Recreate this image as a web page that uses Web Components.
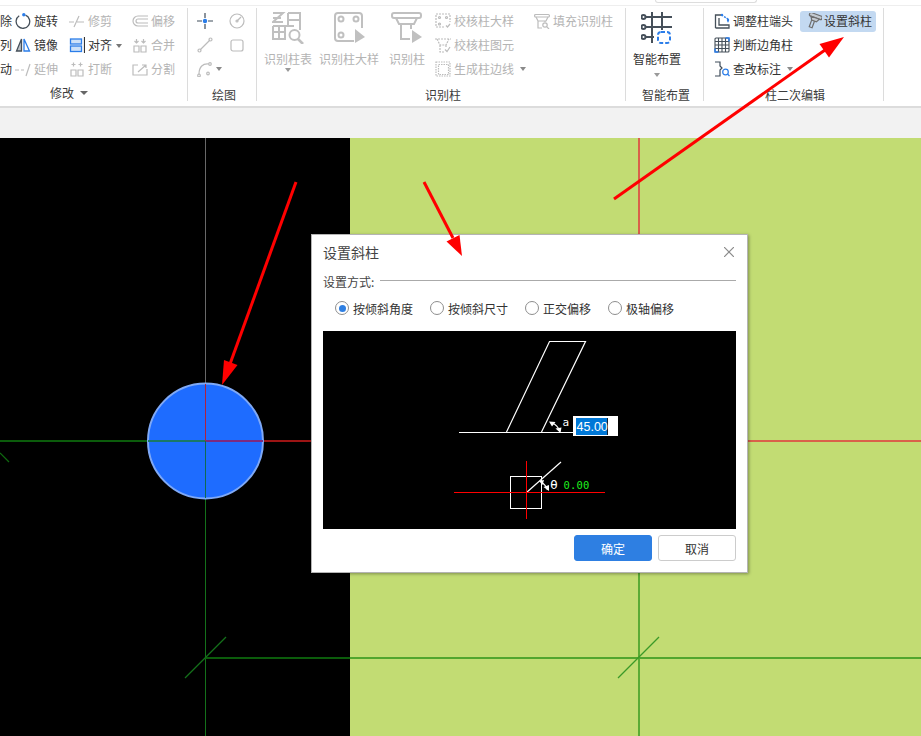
<!DOCTYPE html>
<html lang="zh-CN">
<head>
<meta charset="utf-8">
<title>设置斜柱</title>
<style>
html,body{margin:0;padding:0;background:#fff;overflow:hidden}
body{font-family:"Noto Sans CJK SC","Liberation Sans",sans-serif;font-size:12px;color:#333}
svg{display:block}
svg.d{fill:none;stroke:#bcbcbc;stroke-width:1.2}
svg.k{fill:none;stroke:#46505a;stroke-width:1.3}
</style>
</head>
<body>
<template id="t-shell">
<style>
:host{display:flex;flex-direction:column;position:relative;width:921px;height:736px;overflow:hidden}
.top{height:5px;border-bottom:1px solid #eee;flex:none;box-sizing:content-box}
.top i{display:block;margin-left:655px;width:100px;height:2px;border:1px solid #ddd;border-top:0;border-radius:0 0 3px 3px}
.rib{display:flex;height:100px;flex:none;border-bottom:2px solid #dcdcdc;background:#fff}
.strip{height:30px;flex:none;background:#f2f2f2}
</style>
<div class="top"><i></i></div>
<div class="rib"><slot name="ribbon"></slot></div>
<div class="strip"></div>
<slot></slot>
<slot name="over"></slot>
</template>

<template id="t-group">
<style>
:host{display:block;flex:none;height:100px;padding-top:2px;box-sizing:border-box}
.box{height:93px;border-right:1px solid #dcdcdc;box-sizing:border-box;display:flex;flex-direction:column;padding-top:1px}
.c{display:grid;grid-template-columns:var(--cols,auto);grid-auto-rows:24px;padding-left:var(--pl,0)}
.l{margin-top:auto;margin-bottom:var(--lb-mb,0);padding-left:var(--lb-pl,0);line-height:12px;color:#3c3c3c;display:flex;align-items:center;gap:6px;white-space:nowrap}
.l b{display:var(--lb-arrow,none);width:0;height:0;border:4px solid transparent;border-top:4px solid #666;border-bottom:0}
</style>
<div class="box"><div class="c"><slot></slot></div><div class="l"><span id="lb"></span><b></b></div></div>
</template>

<template id="t-item">
<style>
:host{display:flex;align-items:center;white-space:nowrap;color:#333;font-size:12px;gap:var(--gap,3px);min-width:0}
:host([disabled]){color:#b4b4b4}
:host([active]){background:#c3d9f1;border-radius:3px;height:21px;align-self:center;padding-left:6px;width:76px;box-sizing:border-box;--gap:2px}
:host([clip]){justify-self:start}
.i{width:16px;height:16px;flex:none}
:host([clip]) .i{display:none}
.t{padding-bottom:2px}
.a{display:none;width:0;height:0;border:3px solid transparent;border-top:4px solid #8a8a8a;border-bottom:0;margin-left:3px}
:host([drop]) .a{display:block}
</style>
<span class="i"><slot name="icon"></slot></span><span class="t"><slot></slot></span><span class="a"></span>
</template>

<template id="t-big">
<style>
:host{display:flex;flex-direction:column;align-items:center;grid-row:span 3;padding-top:3px;box-sizing:border-box;white-space:nowrap;color:#333;font-size:12px}
:host([disabled]){color:#b4b4b4}
.i{width:32px;height:32px;flex:none}
.t{margin-top:7px;line-height:16px}
.a{display:none;width:0;height:0;border:3px solid transparent;border-top:4px solid #9a9a9a;border-bottom:0;margin-top:var(--amt,1px)}
:host([drop]) .a{display:block}
</style>
<span class="i"><slot name="icon"></slot></span><span class="t"><slot></slot></span><span class="a"></span>
</template>

<template id="t-canvas">
<style>
:host{display:block;position:relative;flex:1;min-height:0;background:#000}
svg{display:block;position:absolute;left:0;top:0}
</style>
<svg width="921" height="598" viewBox="0 138 921 598" shape-rendering="crispEdges">
<rect x="0" y="138" width="350" height="598" fill="#000"/>
<rect x="350" y="138" width="571" height="598" fill="#c2dc73"/>
<rect x="205" y="138" width="1" height="246" fill="#686868"/>
<rect x="205" y="498" width="1" height="238" fill="#14701a"/>
<rect x="0" y="440" width="147" height="2" fill="#0b5c0b"/>
<rect x="264" y="440" width="60" height="2" fill="#9c1414"/>
<rect x="638" y="138" width="2" height="302" fill="#d9614a"/>
<rect x="638" y="442" width="2" height="294" fill="#5bab35"/>
<rect x="740" y="440" width="181" height="2" fill="#d9614a"/>
<rect x="205" y="657" width="145" height="2" fill="#0b5c0b"/>
<rect x="350" y="657" width="571" height="2" fill="#52a62e"/>
<g shape-rendering="auto">
<line x1="0" y1="453" x2="9" y2="462" stroke="#0f6a0f" stroke-width="1.2"/>
<line x1="185" y1="678" x2="226" y2="637" stroke="#14701a" stroke-width="1.2"/>
<line x1="618" y1="678" x2="659" y2="637" stroke="#3a9a28" stroke-width="1.2"/>
<circle cx="205.500" cy="441" r="57.500" fill="#1e6cff" stroke="#7fa9f6" stroke-width="2"/>
</g>
<rect x="148" y="440" width="57" height="2" fill="#1a7868"/>
<rect x="206" y="440" width="57" height="2" fill="#7c2a80"/>
<rect x="205" y="384" width="1" height="57" fill="#b0203c"/>
<rect x="205" y="441" width="1" height="57" fill="#0f6a50"/>
</svg>
<slot></slot>
</template>

<template id="t-dialog">
<style>
:host{display:block;position:absolute;left:311px;top:96px;width:437px;height:339px;box-sizing:border-box;background:#fff;border:1px solid #b4b4b4;box-shadow:1px 1px 3px rgba(0,0,0,.35);padding:0 11px;font-size:12px;color:#333}
.title{display:flex;justify-content:space-between;align-items:center;height:37px;box-sizing:border-box;padding-bottom:3px;font-size:14px;color:#444}
.title svg{margin-right:2px;display:block}
.sec{display:flex;align-items:center;height:18px;color:#444}
.sec i{flex:1;height:1px;background:#aaa;margin:-1px 0 0 6px}
.opts{display:flex;align-items:center;gap:17px;height:36px;padding-left:12px;margin-bottom:5px}
.pv{height:198px;background:#000}
.pv svg{display:block}
.btns{display:flex;justify-content:flex-end;gap:6px;padding-top:6px}
</style>
<div class="title"><span>设置斜柱</span>
<svg width="10" height="10" viewBox="0 0 10 10"><path d="M0 0L10 10M10 0L0 10" stroke="#8c8c8c" stroke-width="1.2" fill="none"/></svg></div>
<div class="sec"><span>设置方式:</span><i></i></div>
<div class="opts"><slot name="opts"></slot></div>
<div class="pv"><slot name="preview"></slot></div>
<div class="btns"><slot name="btns"></slot></div>
</template>

<template id="t-radio">
<style>
:host{display:flex;align-items:center;gap:4px;white-space:nowrap;color:#333}
i{width:14px;height:14px;box-sizing:border-box;border:1px solid #8e8e8e;border-radius:50%;background:#fff;display:block;position:relative}
:host([checked]) i::after{content:"";position:absolute;left:2.500px;top:2.500px;width:7px;height:7px;border-radius:50%;background:#2e7fe2}
</style>
<i></i><span><slot></slot></span>
</template>

<template id="t-btn">
<style>
:host{display:flex;align-items:center;justify-content:center;width:78px;height:26px;box-sizing:border-box;border:1px solid #ccc;border-radius:3px;background:#fff;color:#333;font-size:12px}
:host([primary]){background:#2e7fe2;border-color:#2e7fe2;color:#fff}
</style>
<slot></slot>
</template>

<template id="t-arrows">
<style>
:host{display:block;position:absolute;left:0;top:0;width:921px;height:736px;pointer-events:none}
</style>
<svg width="921" height="736" viewBox="0 0 921 736" style="display:block">
<g stroke="#f00" stroke-width="3" fill="#f00">
<line x1="296" y1="182" x2="230" y2="364"/>
<polygon stroke="none" points="222,385 237.500,365 224,360"/>
<line x1="424" y1="182" x2="453" y2="238"/>
<polygon stroke="none" points="462,256 459.500,235 446.500,241.500"/>
<line x1="614" y1="199" x2="825" y2="50"/>
<polygon stroke="none" points="844,37 819.500,44 829,57.500"/>
</g>
</svg>
</template>

<script>
function def(name,tid,obs,cb){
  customElements.define(name,class extends HTMLElement{
    constructor(){super();this.attachShadow({mode:'open'}).appendChild(document.getElementById(tid).content.cloneNode(true));}
    connectedCallback(){if(cb)cb(this);}
  });
}
def('app-shell','t-shell');
def('rb-group','t-group',null,e=>{e.shadowRoot.getElementById('lb').textContent=e.getAttribute('label')||'';});
def('rb-item','t-item');
def('rb-big','t-big');
def('cad-canvas','t-canvas');
def('slant-dialog','t-dialog');
def('radio-opt','t-radio');
def('dlg-btn','t-btn');
def('red-arrows','t-arrows');
</script>

<app-shell>
<rb-group slot="ribbon" label="修改" style="width:188px;--cols:15px 54px 63px 55px;--lb-pl:50px;--lb-mb:2px;--lb-arrow:block">
  <rb-item clip>除</rb-item>
  <rb-item>
    <svg slot="icon" class="k" viewBox="0 0 16 16" width="16" height="16"><path d="M10.500 2.200A6.800 6.800 0 1 1 4.200 2.800"/><circle cx="8.800" cy="1.800" r="1.700" fill="#2b7de9" stroke="none"/></svg>旋转</rb-item>
  <rb-item disabled>
    <svg slot="icon" class="d" viewBox="0 0 16 16" width="16" height="16"><path d="M0 9H5M8 9H15M5 14L10 3"/></svg>修剪</rb-item>
  <rb-item disabled>
    <svg slot="icon" class="d" viewBox="0 0 16 16" width="16" height="16"><path d="M16 3H6a5 5 0 0 0 0 10H16M16 6H6a2 2 0 0 0 0 4H16"/></svg>偏移</rb-item>

  <rb-item clip>列</rb-item>
  <rb-item>
    <svg slot="icon" class="k" viewBox="0 0 16 16" width="16" height="16"><path d="M6.500 2L1.500 14H6.500Z" fill="#bfc4ca"/><path d="M9 2L14.500 14H9Z" stroke="#2b7de9"/></svg>镜像</rb-item>
  <rb-item>
    <svg slot="icon" viewBox="0 0 16 16" width="16" height="16"><rect x="1.500" y="2" width="11" height="5" fill="#cfe2f8" stroke="#2b7de9" stroke-width="1.300"/><rect x="1.500" y="9" width="11" height="5.500" fill="#cfe2f8" stroke="#2b7de9" stroke-width="1.300"/><path d="M15.500 0V16" stroke="#333" stroke-width="1.200"/></svg>对齐<span style="display:inline-block;width:0;height:0;border:3px solid transparent;border-top:4px solid #777;border-bottom:0;margin:0 0 2px 4px"></span></rb-item>
  <rb-item disabled>
    <svg slot="icon" class="d" viewBox="0 0 16 16" width="16" height="16"><path d="M2 9h5v6H2zM9 9h5v6H9zM4.500 2v4M2.500 4l2 2 2-2M11.500 2v4M9.500 4l2 2 2-2"/></svg>合并</rb-item>

  <rb-item clip>动</rb-item>
  <rb-item disabled>
    <svg slot="icon" class="d" viewBox="0 0 16 16" width="16" height="16"><path d="M0 9H4M6 9H9M11 15L15 3"/></svg>延伸</rb-item>
  <rb-item disabled>
    <svg slot="icon" class="d" viewBox="0 0 16 16" width="16" height="16"><path d="M2 9h5v6H2zM9 9h5v6H9zM4.500 1.500v4M2.500 3.500h4M11.500 1.500v4M9.500 3.500h4"/></svg>打断</rb-item>
  <rb-item disabled>
    <svg slot="icon" class="d" viewBox="0 0 16 16" width="16" height="16"><path d="M6 4H1V14H15V8M6 11L14 4M10 4h4v3"/></svg>分割</rb-item>
</rb-group>

<rb-group slot="ribbon" label="绘图" style="width:69px;--cols:32px 32px;--pl:9px;--lb-pl:24px">
  <rb-item><svg slot="icon" viewBox="0 0 16 16" width="16" height="16"><path d="M8 0V5M8 11V16M0 8H5M11 8H16" stroke="#3f4c5a" stroke-width="1.200" fill="none"/><circle cx="8" cy="8" r="2.200" fill="#2b7de9"/></svg></rb-item>
  <rb-item disabled><svg slot="icon" class="d" viewBox="0 0 16 16" width="16" height="16"><circle cx="8" cy="8" r="7"/><path d="M8 8L12 4"/><circle cx="8" cy="8" r="1"/></svg></rb-item>
  <rb-item disabled><svg slot="icon" class="d" viewBox="0 0 16 16" width="16" height="16"><path d="M3 13L13 3"/><circle cx="2.500" cy="13.500" r="1.500"/><circle cx="13.500" cy="2.500" r="1.500"/></svg></rb-item>
  <rb-item disabled><svg slot="icon" class="d" viewBox="0 0 16 16" width="16" height="16"><rect x="2" y="3" width="12" height="11" rx="2"/></svg></rb-item>
  <rb-item disabled drop style="--gap:0"><svg slot="icon" class="d" viewBox="0 0 16 16" width="16" height="16"><path d="M2 13C2 6 6 2 12 3"/><circle cx="2" cy="14.500" r="1.300"/><circle cx="13" cy="3" r="1.300"/><circle cx="11" cy="12.500" r="1.300"/></svg></rb-item>
</rb-group>

<rb-group slot="ribbon" label="识别柱" style="width:369px;--cols:62px 60px 56px 99px 91px;--lb-pl:168px">
  <rb-big disabled drop>
    <svg slot="icon" viewBox="0 0 32 32" width="32" height="32" fill="none" stroke="#c0c0c0" stroke-width="2"><path d="M1 1H11L1 10H11M1 6H9M16 1H28V18M16 1V15M16 8H28M1 14H22M1 14V27H14M1 20H13M7 14V27M13 14V27"/><circle cx="22.500" cy="23" r="5"/><path d="M26 27L31 32" stroke-width="2.600"/></svg>识别柱表</rb-big>
  <rb-big disabled>
    <svg slot="icon" viewBox="0 0 32 32" width="32" height="32" fill="none" stroke="#c0c0c0" stroke-width="2"><path d="M21 29H5a3 3 0 0 1-3-3V4a3 3 0 0 1 3-3H26a3 3 0 0 1 3 3V16"/><circle cx="8" cy="7" r="2.500"/><circle cx="23" cy="7" r="2.500"/><circle cx="8" cy="23" r="2.500"/><path d="M22 17L32 25L22 31Z" fill="#c0c0c0" stroke="none"/></svg>识别柱大样</rb-big>
  <rb-big disabled>
    <svg slot="icon" viewBox="0 0 32 32" width="32" height="32" fill="none" stroke="#c0c0c0" stroke-width="2"><rect x="1" y="1" width="29" height="5" rx="2"/><path d="M5 6L8 12H23L26 6M10 12V27H19M20 12V17"/><path d="M21 18L31 25L21 31Z" fill="#c0c0c0" stroke="none"/></svg>识别柱</rb-big>
  <rb-item disabled>
    <svg slot="icon" class="d" viewBox="0 0 16 16" width="16" height="16"><path d="M9 14H1V1H15V9" stroke-dasharray="2 1"/><circle cx="4.500" cy="4.500" r="1"/><circle cx="11.500" cy="4.500" r="1"/><circle cx="4.500" cy="11" r="1"/><path d="M11 12.500L12.500 14L15 11"/></svg>校核柱大样</rb-item>
  <rb-item disabled>
    <svg slot="icon" class="d" viewBox="0 0 16 16" width="16" height="16"><rect x="0.600" y="1.500" width="14.800" height="2.500" rx="1"/><path d="M2 4L4 8H12L14 4M4 8V15H8M11 8V9"/><circle cx="11" cy="12" r="2.200"/><path d="M12.600 13.600L15 16"/></svg>填充识别柱</rb-item>
  <rb-item disabled style="grid-column:4;grid-row:2">
    <svg slot="icon" class="d" viewBox="0 0 16 16" width="16" height="16"><path d="M0 2H16M2 2L5 8H11L14 2M5 8V15H9M11 8V10" stroke-dasharray="2 1"/><path d="M10 12.500L12 14.500L15 10"/></svg>校核柱图元</rb-item>
  <rb-item disabled drop style="grid-column:4;grid-row:3;--gap:3px">
    <svg slot="icon" class="d" viewBox="0 0 16 16" width="16" height="16"><rect x="1" y="1" width="14" height="14" stroke-dasharray="1.500 1"/><rect x="3.500" y="3.500" width="10" height="10" stroke-dasharray="1.500 1"/></svg>生成柱边线</rb-item>
</rb-group>

<rb-group slot="ribbon" label="智能布置" style="width:78px;--cols:62px;--lb-pl:16px;--amt:6px">
  <rb-big drop>
    <svg slot="icon" viewBox="0 0 32 32" width="32" height="32" fill="none"><g stroke="#46505a" stroke-width="2"><path d="M5 5H31M5 15H31M5 25H13M11 0V31M21 0V18"/><circle cx="2.500" cy="5" r="2" fill="#fff"/><circle cx="2.500" cy="15" r="2" fill="#fff"/><circle cx="2.500" cy="25" r="2" fill="#fff"/></g><rect x="17" y="20" width="12" height="11" rx="3" stroke="#2b7de9" stroke-width="2" stroke-dasharray="4 2"/></svg>智能布置</rb-big>
</rb-group>

<rb-group slot="ribbon" label="柱二次编辑" style="width:180px;--cols:86px 80px;--pl:10px;--lb-pl:61px">
  <rb-item>
    <svg slot="icon" class="k" viewBox="0 0 16 16" width="16" height="16"><path d="M1.500 15V2H7.500M5 5V12H15V15H1.500"/><path d="M7.500 2L14 6V10" stroke="#2b7de9" stroke-dasharray="2 1"/><circle cx="8" cy="2" r="1.200" fill="#2b7de9" stroke="none"/><circle cx="14" cy="7" r="1.200" fill="#2b7de9" stroke="none"/></svg>调整柱端头</rb-item>
  <rb-item active>
    <svg slot="icon" viewBox="0 0 16 16" width="16" height="16" fill="#c4cad0" stroke="#6e6e6e" stroke-width="1.200"><g transform="rotate(20 8 8)"><rect x="1.500" y="1" width="13" height="3.500" rx="1"/><path d="M3.500 4.500L5.500 8H10.500L12.500 4.500Z"/><path d="M5.500 8V15H8.500V8" fill="none"/></g></svg>设置斜柱</rb-item>
  <rb-item style="grid-column:1">
    <svg slot="icon" viewBox="0 0 16 16" width="16" height="16" fill="none" stroke="#46505a" stroke-width="1.100"><rect x="1" y="1" width="14" height="14" rx="1"/><path d="M4.500 1V15M8 1V15M11.500 1V15M1 4.500H15M1 8H15M1 11.500H15"/><path d="M11.500 1H15V4.500M1 11.500V15H4.500" stroke="#2b7de9" stroke-width="1.500"/></svg>判断边角柱</rb-item>
  <rb-item drop style="grid-column:1">
    <svg slot="icon" viewBox="0 0 16 16" width="16" height="16" fill="none" stroke="#3f4c5a" stroke-width="1.200"><path d="M1 1H6V5L8 7L6 9V15H1"/><g stroke="#2b7de9"><circle cx="11.500" cy="11" r="2.800"/><path d="M13.500 13L15.500 15"/></g></svg>查改标注</rb-item>
</rb-group>

<cad-canvas>
  <slant-dialog>
    <radio-opt slot="opts" checked>按倾斜角度</radio-opt>
    <radio-opt slot="opts">按倾斜尺寸</radio-opt>
    <radio-opt slot="opts">正交偏移</radio-opt>
    <radio-opt slot="opts">极轴偏移</radio-opt>
    <svg slot="preview" width="413" height="198" viewBox="323 331 413 198" style="display:block">
      <g fill="none" stroke="#fff" stroke-width="1.200">
        <path d="M459 432.500H574"/>
        <path d="M506.500 432L549.500 341.500H585.500L541.500 432"/>
        <path d="M552 423A12 12 0 0 1 559.500 431"/>
        <rect x="510.500" y="476.500" width="31" height="32" shape-rendering="crispEdges"/>
        <path d="M526.500 492.500L561 462"/>
        <path d="M541 482A14 14 0 0 1 547.500 490"/>
      </g>
      <path d="M549 421.500L555.500 422L552 426.500ZM560.500 433L555.500 428.500L561.500 427.500ZM539 481L544 480L542.500 485ZM549 491L543.500 487L549 485Z" fill="#fff"/>
      <g stroke="#f00" stroke-width="1.200" shape-rendering="crispEdges">
        <path d="M454 492.500H605M526.500 461V519"/>
      </g>
      <rect x="573" y="416" width="45" height="20" fill="#fff"/>
      <rect x="576" y="418" width="31" height="17" fill="#0078d7"/>
      <rect x="607" y="418" width="1" height="17" fill="#123"/>
      <text x="576.500" y="431" font-family="'Liberation Sans',sans-serif" font-size="12.500" fill="#fff">45.00</text>
      <text x="562.500" y="426" font-family="'DejaVu Sans Mono',monospace" font-size="11" fill="#fff">a</text>
      <text x="550" y="489" font-family="'DejaVu Sans Mono',monospace" font-size="13" fill="#fff">θ</text>
      <text x="563.500" y="489" font-family="'DejaVu Sans Mono',monospace" font-size="10.500" letter-spacing=".2" fill="#1ef01e">0.00</text>
    </svg>
    <dlg-btn slot="btns" primary>确定</dlg-btn>
    <dlg-btn slot="btns">取消</dlg-btn>
  </slant-dialog>
</cad-canvas>
<red-arrows slot="over"></red-arrows>
</app-shell>
</body>
</html>
